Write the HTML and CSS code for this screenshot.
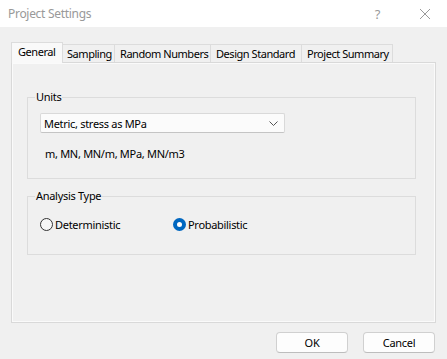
FILE: index.html
```html
<!DOCTYPE html>
<html lang="en">
<head>
    <meta charset="UTF-8">
    <meta name="viewport" content="width=device-width, initial-scale=1.0">
    <title>Project Settings</title>
    <link rel="stylesheet" href="styles.css">
</head>
<body>
    <div class="titlebar">
        <span class="title">Project Settings</span>
        <span class="title-btn help">?</span>
        <span class="title-btn close">
            <svg width="12" height="12" viewBox="0 0 12 12"><path d="M1 1L11 11M11 1L1 11" stroke="#9a9a9a" stroke-width="1" fill="none"/></svg>
        </span>
    </div>

    <div class="dialog">
        <!-- Вкладки -->
        <div class="tabs">
            <div class="tab active tab-general">General</div>
            <div class="tab tab-sampling">Sampling</div>
            <div class="tab tab-random">Random Numbers</div>
            <div class="tab tab-design">Design Standard</div>
            <div class="tab tab-summary">Project Summary</div>
        </div>

        <div class="panel">
            <fieldset class="group units">
                <legend>Units</legend>
                <div class="combo">
                    <span>Metric, stress as MPa</span>
                    <svg width="9" height="5" viewBox="0 0 9 5"><path d="M0.5 0.5L4.5 4.5L8.5 0.5" stroke="#555" stroke-width="1" fill="none"/></svg>
                </div>
                <div class="units-text">m, MN, MN/m, MPa, MN/m3</div>
            </fieldset>

            <fieldset class="group analysis">
                <legend>Analysis Type</legend>
                <div class="radios">
                    <label class="radio"><span class="dot"></span>Deterministic</label>
                    <label class="radio checked"><span class="dot"></span>Probabilistic</label>
                </div>
            </fieldset>
        </div>

        <!-- Кнопки -->
        <div class="buttons">
            <button class="btn">OK</button>
            <button class="btn">Cancel</button>
        </div>
    </div>
</body>
</html>
```

FILE: styles.css
```css
body {
    margin: 0;
    background-color: #f0f0f0;
    font-family: "Segoe UI", "Noto Sans", sans-serif;
    font-size: 11px;
    letter-spacing: -0.3px;
    color: #000;
}
.titlebar {
    height: 27px;
    background: #fff;
    display: flex;
    align-items: center;
    padding-left: 8px;
}
.title {
    color: #999;
    flex: 1;
    font-size: 12px;
}
.title-btn {
    color: #9a9a9a;
    display: flex;
    align-items: center;
}
.help {
    margin-right: 39px;
    font-size: 13px;
}
.close {
    margin-right: 16px;
}
.dialog {
    padding: 15px 11px 0 11px;
}
.tabs {
    display: flex;
    align-items: flex-end;
    height: 20px;
}
.tab {
    box-sizing: border-box;
    height: 18px;
    line-height: 17px;
    padding: 0 0 0 5px;
    border: 1px solid #dcdcdc;
    border-bottom: none;
    margin-left: -1px;
    background: #f0f0f0;
    white-space: nowrap;
    overflow: hidden;
    letter-spacing: -0.45px;
}
.tab.active {
    height: 21px;
    line-height: 18px;
    margin-left: 0;
    margin-bottom: -1px;
    background: #f9f9f9;
    position: relative;
    z-index: 1;
    padding-left: 6px;
}
.tab-general { width: 52px; }
.tab-sampling { width: 53px; padding-left: 4px; }
.tab-random { width: 97px; }
.tab-design { width: 92px; }
.tab-summary { width: 92px; }
.panel {
    height: 259px;
    border: 1px solid #d9d9d9;
    box-shadow: inset 0 0 0 1px #fafafa;
    padding: 0 19px 0 15px;
}
.group {
    box-sizing: border-box;
    margin: 0;
    border: 1px solid #dcdcdc;
    padding: 0 12px;
}
.group legend {
    padding: 0 1px;
    margin-left: -5px;
    line-height: 14px;
}
.units {
    margin-top: 27px;
    height: 89px;
}
.combo {
    margin-top: 9px;
    width: 234px;
    height: 18px;
    border: 1px solid #d9d9d9;
    border-bottom-color: #c4c4c4;
    border-radius: 2px;
    background: #fbfbfb;
    display: flex;
    align-items: center;
    justify-content: space-between;
    padding: 0 6px 0 3px;
    box-sizing: content-box;
}
.units-text {
    margin-top: 13px;
    padding-left: 5px;
    line-height: 16px;
}
.analysis {
    margin-top: 10px;
    height: 66px;
}
.radios {
    display: flex;
    margin-top: 14px;
}
.radio {
    display: flex;
    align-items: center;
    width: 133px;
}
.dot {
    width: 11px;
    height: 11px;
    border: 1px solid #333;
    border-radius: 50%;
    background: #f7f7f7;
    margin-right: 2px;
    flex: none;
}
.radio.checked .dot {
    width: 5px;
    height: 5px;
    border: 4px solid #0067c0;
    background: #fff;
}
.buttons {
    display: flex;
    justify-content: flex-end;
    gap: 15px;
    margin-top: 9px;
    padding-right: 1px;
}
.btn {
    width: 72px;
    height: 21px;
    font-family: inherit;
    font-size: 11px;
    letter-spacing: -0.3px;
    background: #fdfdfd;
    border: 1px solid #d0d0d0;
    border-bottom-color: #bdbdbd;
    border-radius: 4px;
    padding: 0;
}
```
